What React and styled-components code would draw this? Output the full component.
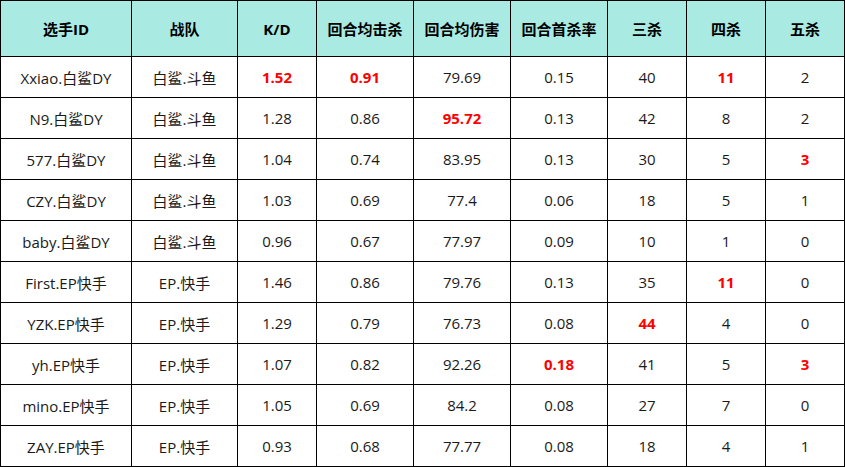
import React from "react";
import styled, { createGlobalStyle } from "styled-components";

const Global = createGlobalStyle`
  html, body { margin: 0; padding: 0; background: #fff; }
  body { font-family: "Open Sans", "Noto Sans CJK SC", sans-serif; }
`;

const Grid = styled.div`
  display: grid;
  grid-template-columns: 130px 105px 78px 96px 96px 96px 78px 78px 78px;
  grid-template-rows: 55px repeat(10, 40px);
  gap: 1px;
  padding: 1px;
  background: #000;
  width: max-content;
`;

const HeadCell = styled.div`
  background: #a9ebe3;
  display: flex;
  align-items: center;
  justify-content: center;
  font-family: "Open Sans", "Noto Sans CJK SC", sans-serif;
  font-weight: 700;
  font-size: 15px;
  color: #000;
`;

const Cell = styled.div`
  background: #fff;
  display: flex;
  align-items: center;
  justify-content: center;
  font-family: "Open Sans", "Noto Sans CJK SC", sans-serif;
  font-size: 15px;
  font-weight: ${(p) => (p.$hot ? 700 : 400)};
  color: ${(p) => (p.$hot ? "#ff0000" : "#1a1a1a")};
`;

const headers = ["选手ID", "战队", "K/D", "回合均击杀", "回合均伤害", "回合首杀率", "三杀", "四杀", "五杀"];

const rows = [
  { d: ["Xxiao.白鲨DY", "白鲨.斗鱼", "1.52", "0.91", "79.69", "0.15", "40", "11", "2"], hot: [2, 3, 7] },
  { d: ["N9.白鲨DY", "白鲨.斗鱼", "1.28", "0.86", "95.72", "0.13", "42", "8", "2"], hot: [4] },
  { d: ["577.白鲨DY", "白鲨.斗鱼", "1.04", "0.74", "83.95", "0.13", "30", "5", "3"], hot: [8] },
  { d: ["CZY.白鲨DY", "白鲨.斗鱼", "1.03", "0.69", "77.4", "0.06", "18", "5", "1"], hot: [] },
  { d: ["baby.白鲨DY", "白鲨.斗鱼", "0.96", "0.67", "77.97", "0.09", "10", "1", "0"], hot: [] },
  { d: ["First.EP快手", "EP.快手", "1.46", "0.86", "79.76", "0.13", "35", "11", "0"], hot: [7] },
  { d: ["YZK.EP快手", "EP.快手", "1.29", "0.79", "76.73", "0.08", "44", "4", "0"], hot: [6] },
  { d: ["yh.EP快手", "EP.快手", "1.07", "0.82", "92.26", "0.18", "41", "5", "3"], hot: [5, 8] },
  { d: ["mino.EP快手", "EP.快手", "1.05", "0.69", "84.2", "0.08", "27", "7", "0"], hot: [] },
  { d: ["ZAY.EP快手", "EP.快手", "0.93", "0.68", "77.77", "0.08", "18", "4", "1"], hot: [] },
];

export default function App() {
  return (
    <>
      <Global />
      <Grid>
        {headers.map((h) => (
          <HeadCell key={h}>{h}</HeadCell>
        ))}
        {rows.map((r, i) =>
          r.d.map((v, j) => (
            <Cell key={`${i}-${j}`} $hot={r.hot.includes(j)}>
              {v}
            </Cell>
          ))
        )}
      </Grid>
    </>
  );
}
